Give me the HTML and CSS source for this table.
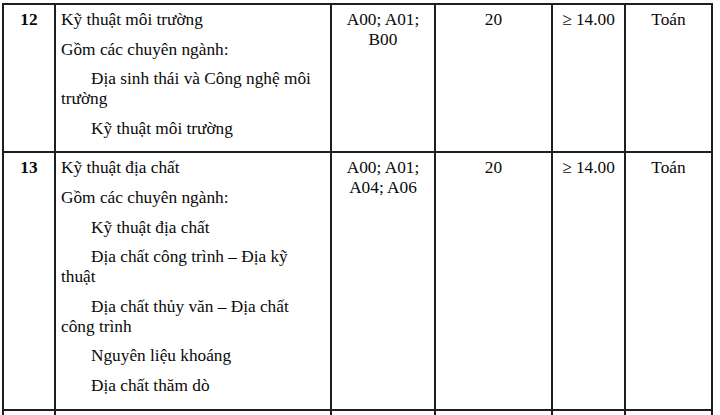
FILE: index.html
```html
<!DOCTYPE html>
<html lang="vi">
<head>
<meta charset="utf-8">
<link rel="stylesheet" href="styles.css">
</head>
<body>
<table class="tbl">
  <colgroup>
    <col class="c-no">
    <col class="c-name">
    <col class="c-grp">
    <col class="c-qty">
    <col class="c-score">
    <col class="c-sub">
  </colgroup>
  <tr>
    <td class="no">12</td>
    <td class="name">
      <p>Kỹ thuật môi trường</p>
      <p>Gồm các chuyên ngành:</p>
      <p class="ind">Địa sinh thái và Công nghệ môi trường</p>
      <p class="ind">Kỹ thuật môi trường</p>
    </td>
    <td class="ctr">A00; A01; B00</td>
    <td class="ctr">20</td>
    <td class="ctr">≥ 14.00</td>
    <td class="ctr">Toán</td>
  </tr>
  <tr>
    <td class="no">13</td>
    <td class="name">
      <p>Kỹ thuật địa chất</p>
      <p>Gồm các chuyên ngành:</p>
      <p class="ind">Kỹ thuật địa chất</p>
      <p class="ind">Địa chất công trình – Địa kỹ thuật</p>
      <p class="ind">Địa chất thủy văn – Địa chất công trình</p>
      <p class="ind">Nguyên liệu khoáng</p>
      <p class="ind">Địa chất thăm dò</p>
    </td>
    <td class="ctr">A00; A01; A04; A06</td>
    <td class="ctr">20</td>
    <td class="ctr">≥ 14.00</td>
    <td class="ctr">Toán</td>
  </tr>
  <tr class="next">
    <td></td><td></td><td></td><td></td><td></td><td></td>
  </tr>
</table>
</body>
</html>
```
FILE: styles.css
```css
html, body {
  margin: 0;
  padding: 0;
  background: #fff;
  overflow: hidden;
}
body {
  font-family: "Liberation Serif", "Times New Roman", serif;
  font-size: 17.3px;
  line-height: 20px;
  color: #0a0a0a;
}
.tbl {
  margin: 3px 0 0 2px;
  border-collapse: collapse;
  table-layout: fixed;
  width: 711px;
}
.c-no { width: 52px; }
.c-name { width: 276px; }
.c-grp { width: 104px; }
.c-qty { width: 117px; }
.c-score { width: 73px; }
.c-sub { width: 87px; }
.tbl td {
  border: 2px solid #1e1e1e;
  vertical-align: top;
  padding: 5px 5px 3px 5px;
}
.tbl .no {
  font-weight: bold;
  text-align: center;
}
.tbl .name {
  padding-right: 8px;
}
.tbl .ctr {
  text-align: center;
}
.name p {
  margin: 0 0 9.6px 0;
}
.name p.ind {
  text-indent: 30px;
}
.next td {
  height: 30px;
}
```
